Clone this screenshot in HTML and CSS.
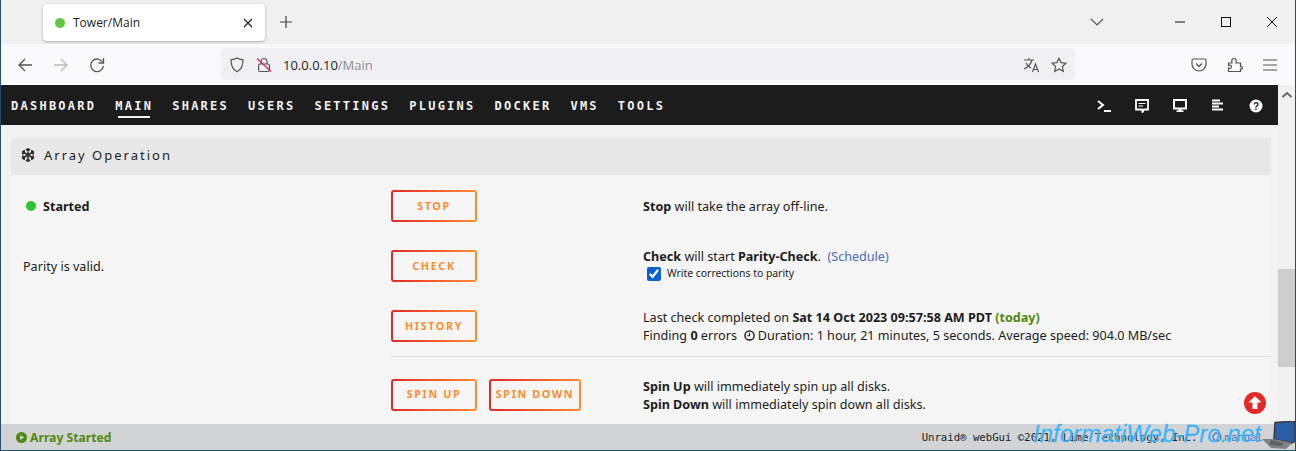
FILE: index.html
```html
<!DOCTYPE html>
<html lang="en">
<head>
    <meta charset="UTF-8">
    <title>Tower/Main</title>
    <link rel="stylesheet" href="styles.css">
</head>
<body>
    <div class="window">
        <!-- browser tabs -->
        <div class="tabbar">
            <div class="tab">
                <span class="favicon"></span>
                <span class="tab-title">Tower/Main</span>
                <svg class="tab-close" width="10" height="10" viewBox="0 0 10 10"><path d="M1 1l8 8M9 1l-8 8" stroke="#222" stroke-width="1.2"/></svg>
            </div>
            <svg class="tab-new" width="14" height="14" viewBox="0 0 14 14"><path d="M7 1v12M1 7h12" stroke="#444" stroke-width="1.2"/></svg>
            <div class="tabbar-right">
                <svg class="tab-list" width="14" height="8" viewBox="0 0 14 8"><path d="M1 1l6 6 6-6" fill="none" stroke="#555" stroke-width="1.2"/></svg>
                <div class="win-controls">
                    <svg width="10" height="10" viewBox="0 0 10 10"><path d="M0 5h10" stroke="#111" stroke-width="1"/></svg>
                    <svg width="10" height="10" viewBox="0 0 10 10"><rect x=".5" y=".5" width="9" height="9" fill="none" stroke="#111"/></svg>
                    <svg width="10" height="10" viewBox="0 0 10 10"><path d="M0 0l10 10M10 0L0 10" stroke="#111" stroke-width="1"/></svg>
                </div>
            </div>
        </div>

        <!-- browser toolbar -->
        <div class="toolbar">
            <div class="tool-buttons">
                <svg width="16" height="16" viewBox="0 0 16 16"><path d="M15 8H2M8 2L2 8l6 6" fill="none" stroke="#555" stroke-width="1.3"/></svg>
                <svg width="16" height="16" viewBox="0 0 16 16"><path d="M1 8h13M8 2l6 6-6 6" fill="none" stroke="#bbb" stroke-width="1.3"/></svg>
                <svg width="16" height="16" viewBox="0 0 16 16"><path d="M13.5 5A6.3 6.3 0 1 0 14.4 9" fill="none" stroke="#555" stroke-width="1.3"/><path d="M14.5 1v5h-5" fill="none" stroke="#555" stroke-width="1.3"/></svg>
            </div>
            <div class="urlbar">
                <svg width="16" height="16" viewBox="0 0 16 16"><path d="M8 1c2 1.2 4 1.6 6 1.8 0 5-1 9.500-6 12C3 12.300 2 7.800 2 2.800 4 2.600 6 2.200 8 1z" fill="none" stroke="#555" stroke-width="1.2"/></svg>
                <svg class="lock" width="16" height="16" viewBox="0 0 16 16"><path d="M5 7V4.500a3 3 0 0 1 6 0V7" fill="none" stroke="#555" stroke-width="1.2"/><rect x="2.600" y="7" width="10.800" height="7.500" rx="1.500" fill="none" stroke="#555" stroke-width="1.2"/><path d="M1 1.500l14 13" stroke="#e22850" stroke-width="1.300"/></svg>
                <span class="url">10.0.0.10<span class="url-path">/Main</span></span>
                <svg class="translate" width="18" height="16" viewBox="0 0 18 16"><path d="M1 3h10M6 1v2M9 3C8 7 5 10 1 12M3 6c1 2.500 3 4 5 5" fill="none" stroke="#555" stroke-width="1.200"/><path d="M9.500 15l3-8 3 8M10.500 12.500h4" fill="none" stroke="#555" stroke-width="1.200"/></svg>
                <svg width="16" height="16" viewBox="0 0 16 16"><path d="M8 1.200l2.100 4.400 4.800.6-3.500 3.300.9 4.800L8 12l-4.300 2.300.9-4.800L1.100 6.200l4.800-.6z" fill="none" stroke="#555" stroke-width="1.200"/></svg>
            </div>
            <div class="tool-right">
                <svg width="16" height="16" viewBox="0 0 16 16"><path d="M2.500 2h11A1.500 1.500 0 0 1 15 3.500V7a7 7 0 0 1-14 0V3.500A1.500 1.500 0 0 1 2.500 2z" fill="none" stroke="#555" stroke-width="1.200"/><path d="M5 6.500l3 3 3-3" fill="none" stroke="#555" stroke-width="1.300"/></svg>
                <svg width="16" height="16" viewBox="0 0 16 16"><path d="M1.500 6H5C4 3 5.500 1.500 7 1.500S10 3 9 6h4.500v3.500C16 8.500 16 13 13.500 12v2.500h-12V11c2 1 3-.5 3-1.500S3.500 7.500 1.500 8.500z" fill="none" stroke="#555" stroke-width="1.200"/></svg>
                <svg width="14" height="12" viewBox="0 0 14 12"><path d="M0 1h14M0 6h14M0 11h14" stroke="#555" stroke-width="1.200"/></svg>
            </div>
        </div>

        <div class="viewport">
            <div class="page">
                <!-- unraid menu -->
                <nav class="menu">
                    <div class="menu-links">
                        <a>DASHBOARD</a>
                        <a class="active">MAIN</a>
                        <a>SHARES</a>
                        <a>USERS</a>
                        <a>SETTINGS</a>
                        <a>PLUGINS</a>
                        <a>DOCKER</a>
                        <a>VMS</a>
                        <a>TOOLS</a>
                    </div>
                    <div class="menu-icons">
                        <svg width="14" height="14" viewBox="0 0 14 14"><path d="M1 2l5 4-5 4" fill="none" stroke="#fff" stroke-width="2"/><path d="M7 12h7" stroke="#fff" stroke-width="2"/></svg>
                        <svg width="14" height="14" viewBox="0 0 14 14"><path d="M1 1h12v9.500H9L7.500 13 7 10.500H1z" fill="none" stroke="#fff" stroke-width="1.800"/><path d="M3.500 4.500h7M3.500 7h4.500" stroke="#fff" stroke-width="1.200"/></svg>
                        <svg width="14" height="14" viewBox="0 0 14 14"><path d="M1 1h12v8.500H1z" fill="none" stroke="#fff" stroke-width="2"/><path d="M5.500 10h3v1.500h2V13h-7v-1.500h2z" fill="#fff"/></svg>
                        <svg width="14" height="14" viewBox="0 0 14 14"><path d="M1 1.500h8M1 4.500h11M1 7.500h7M1 10.500h11" stroke="#fff" stroke-width="2"/></svg>
                        <svg width="14" height="14" viewBox="0 0 14 14"><circle cx="7" cy="7" r="6.500" fill="#fff"/><text class="help-mark" x="7" y="10.500" text-anchor="middle">?</text></svg>
                    </div>
                </nav>

                <section class="array-op">
                    <div class="title">
                        <svg width="14" height="14" viewBox="0 0 14 14"><path d="M7 0v14M1 3.500l12 7M13 3.500l-12 7M5 1l2 2 2-2M5 13l2-2 2 2M1 6l2.500-1L3 2M13 6l-2.500-1L11 2M1 8l2.500 1L3 12M13 8l-2.500 1 .5 3" fill="none" stroke="#2b2b2b" stroke-width="1.500"/></svg>
                        <span>Array Operation</span>
                    </div>

                    <div class="rows">
                        <div class="row">
                            <div class="state"><span class="dot"></span><b>Started</b></div>
                            <div class="actions"><button>STOP</button></div>
                            <div class="info"><b>Stop</b> will take the array off-line.</div>
                        </div>
                        <div class="row">
                            <div class="note">Parity is valid.</div>
                            <div class="actions"><button>CHECK</button></div>
                            <div class="info info-check">
                                <div><b>Check</b> will start <b>Parity-Check</b>.&nbsp; <a class="link">(Schedule)</a></div>
                                <label class="correct"><input type="checkbox" checked>Write corrections to parity</label>
                            </div>
                        </div>
                        <div class="row">
                            <div></div>
                            <div class="actions"><button>HISTORY</button></div>
                            <div class="info">
                                <div>Last check completed on <b>Sat 14 Oct 2023 09:57:58 AM PDT</b> <b class="today">(today)</b></div>
                                <div>Finding <b>0</b> errors &nbsp;<svg class="clock" width="11" height="11" viewBox="0 0 12 12"><circle cx="6" cy="6" r="5" fill="none" stroke="#222" stroke-width="1.600"/><path d="M6 3v3.300H3.500" fill="none" stroke="#222" stroke-width="1.200"/></svg> Duration: 1 hour, 21 minutes, 5 seconds. Average speed: 904.0 MB/sec</div>
                            </div>
                        </div>
                        <div class="row row-spin">
                            <div class="actions"><button>SPIN UP</button><button class="wide">SPIN DOWN</button></div>
                            <div class="info">
                                <div><b>Spin Up</b> will immediately spin up all disks.</div>
                                <div><b>Spin Down</b> will immediately spin down all disks.</div>
                            </div>
                        </div>
                    </div>
                </section>

                <svg class="to-top" width="22" height="22" viewBox="0 0 22 22"><circle cx="11" cy="11" r="11" fill="#e22828"/><path d="M11 4l6.500 6.500H13.500V17h-5v-6.500H4.500z" fill="#fff"/></svg>
            </div>

            <div class="scrollbar">
                <svg width="12" height="7" viewBox="0 0 12 7"><path d="M1.500 6L6 2l4.500 4" fill="none" stroke="#666" stroke-width="2"/></svg>
                <div class="thumb"></div>
            </div>
        </div>

        <footer class="footer">
            <div class="footer-state">
                <svg width="11" height="11" viewBox="0 0 12 12"><circle cx="6" cy="6" r="6" fill="#4f8a10"/><path d="M4.500 3.200L9 6l-4.500 2.800z" fill="#d2d3d5"/></svg>
                Array Started
            </div>
            <div class="footer-copy">
                <span class="copyright">Unraid® webGui ©2021, Lime Technology, Inc.</span>
                <svg width="10" height="10" viewBox="0 0 10 10"><circle cx="5" cy="5" r="4" fill="none" stroke="#486dba" stroke-width="1.300"/></svg>
                <span class="manual">manual</span>
            </div>
        </footer>

        <!-- watermark on top of the screenshot -->
        <div class="watermark">InformatiWeb-Pro.net</div>
        <svg class="laptop" width="33" height="29" viewBox="0 0 33 29">
            <path d="M13 1.500L33 0v20l-3 2-18-4z" fill="#2a5ea8" stroke="#3a3a3a" stroke-width="1.500"/>
            <path d="M0 18l12 0 18 4-6 6-15-1z" fill="#808285"/>
            <path d="M9 19l13 3-3 3-12-1z" fill="#5f6164"/>
        </svg>
    </div>
</body>
</html>
```

FILE: styles.css
```css
* {
    box-sizing: border-box;
}
html, body {
    margin: 0;
    height: 100%;
    overflow: hidden;
}
body {
    font-family: "Noto Sans", "Open Sans", sans-serif;
    font-size: 13px;
    color: #1c1c1c;
}
svg {
    display: block;
    flex: none;
}

.window {
    position: relative;
    width: 1296px;
    height: 451px;
    display: flex;
    flex-direction: column;
    border-left: 1px solid #1b5272;
    border-right: 1px solid #1b5272;
    border-bottom: 1px solid #1b5272;
    background: #f2f2f2;
}

/* browser tabs */
.tabbar {
    height: 44px;
    flex: none;
    display: flex;
    align-items: center;
    background: #f0f0f0;
    padding: 0 0 0 42px;
}
.tab {
    width: 222px;
    height: 37px;
    margin-top: 1px;
    display: flex;
    align-items: center;
    padding: 0 12px 0 12px;
    background: #fff;
    border-radius: 4px;
    box-shadow: 0 1px 3px rgba(0, 0, 0, 0.3);
}
.favicon {
    width: 10px;
    height: 10px;
    border-radius: 50%;
    background: #5fc63f;
}
.tab-title {
    flex: 1;
    margin-left: 8px;
    font-family: "Open Sans", sans-serif;
    font-size: 12px;
    color: #1c1c1c;
}
.tab-new {
    margin-left: 14px;
}
.tabbar-right {
    flex: 1;
    display: flex;
    justify-content: flex-end;
    align-items: center;
}
.tab-list {
    margin-right: 71px;
}
.win-controls {
    display: flex;
    gap: 36px;
    padding-right: 18px;
}

/* browser toolbar */
.toolbar {
    height: 41px;
    flex: none;
    display: flex;
    align-items: center;
    background: #f9f9fb;
    border-bottom: 1px solid #fff;
    padding-left: 16px;
}
.tool-buttons {
    display: flex;
    gap: 20px;
    width: 204px;
    margin-top: 1px;
}
.urlbar {
    width: 854px;
    height: 32px;
    display: flex;
    align-items: center;
    gap: 12px;
    padding: 1px 8px 0;
    background: #f0f0f4;
    border-radius: 4px;
}
.lock {
    margin-left: -1px;
}
.url {
    flex: 1;
    margin-left: -1px;
    font-family: "Open Sans", sans-serif;
    font-size: 13px;
}
.url-path {
    color: #8a8a8e;
}
.translate {
    margin-right: -2px;
}
.tool-right {
    display: flex;
    align-items: center;
    gap: 20px;
    margin-left: 116px;
    margin-top: 1px;
}

.viewport {
    flex: 1;
    min-height: 0;
    display: flex;
}
.page {
    position: relative;
    width: 1277px;
    overflow: hidden;
}
.scrollbar {
    flex: 1;
    display: flex;
    flex-direction: column;
    align-items: center;
    padding-top: 6px;
    background: #f0f0f0;
}
.thumb {
    width: 100%;
    height: 98px;
    margin-top: 171px;
    background: #cdcdcd;
}

/* unraid menu */
.menu {
    height: 40px;
    display: flex;
    align-items: center;
    justify-content: space-between;
    background: #1c1c1c;
    padding: 2px 15px 0 10px;
}
.menu-links {
    display: flex;
    gap: 19px;
}
.menu-links a {
    position: relative;
    font-family: "DejaVu Sans Mono", monospace;
    font-size: 12px;
    font-weight: 700;
    letter-spacing: 2.25px;
    color: #f2f2f2;
}
.menu-links a.active::after {
    content: "";
    position: absolute;
    left: 3px;
    right: 3px;
    bottom: -5px;
    height: 2px;
    background: #f2f2f2;
}
.menu-icons {
    display: flex;
    gap: 24px;
}
.help-mark {
    font-family: "Liberation Sans", sans-serif;
    font-size: 10px;
    font-weight: 700;
    fill: #1c1c1c;
}

/* array operation */
.array-op {
    margin: 13px 7px 0 10px;
    background: #f5f5f5;
}
.title {
    height: 37px;
    display: flex;
    align-items: center;
    gap: 9px;
    padding: 0 0 3px 10px;
    background: #e8e8e8;
    font-size: 13px;
    letter-spacing: 2px;
}
.rows {
    display: flex;
    flex-direction: column;
    padding-top: 1px;
}
.row {
    height: 60px;
    display: grid;
    grid-template-columns: 380px 252px 1fr;
    align-items: center;
}
.row-spin {
    height: 76px;
    margin-left: 379px;
    grid-template-columns: 253px 1fr;
    border-top: 1px solid #e0e0e0;
}
.row-spin .actions {
    padding-left: 1px;
}
.state {
    display: flex;
    align-items: center;
    gap: 7px;
    padding-left: 15px;
    font-size: 12.6px;
}
.dot {
    width: 10px;
    height: 10px;
    border-radius: 50%;
    background: #2dc52d;
}
.note {
    padding-left: 12px;
    font-size: 12.6px;
}
.actions {
    display: flex;
    gap: 12px;
}
button {
    width: 86px;
    height: 32px;
    padding: 0 0 2px;
    border: 2px solid transparent;
    border-radius: 3px;
    background: linear-gradient(#f5f5f5, #f5f5f5) padding-box, linear-gradient(90deg, #e22828, #ff8c2f) border-box;
    font-family: "Noto Sans", sans-serif;
    font-size: 10.8px;
    font-weight: 700;
    letter-spacing: 1.6px;
    color: #ff8c2f;
}
button.wide {
    width: 92px;
}
.info {
    padding-top: 2px;
    line-height: 18px;
    font-size: 12.6px;
}
.info-check {
    padding: 0 0 2px;
}
.link {
    color: #486dba;
}
.correct {
    display: flex;
    align-items: center;
    margin: -1px 0 0 4px;
    font-size: 10.4px;
    line-height: 17px;
}
.correct input {
    width: 14px;
    height: 14px;
    margin: 0 6px 0 0;
    accent-color: #0a62d0;
}
.today {
    color: #4f8a10;
}
.clock {
    display: inline-block;
    vertical-align: -1px;
}
.to-top {
    position: absolute;
    right: 12px;
    bottom: 10px;
}

/* footer */
.footer {
    height: 26px;
    flex: none;
    display: flex;
    align-items: center;
    justify-content: space-between;
    background: #d2d3d5;
    padding: 0 32px 0 15px;
}
.footer-state {
    display: flex;
    align-items: center;
    gap: 3px;
    font-size: 12.2px;
    font-weight: 700;
    color: #4f8a10;
}
.footer-copy {
    display: flex;
    align-items: center;
    gap: 3px;
    font-family: "DejaVu Sans Mono", monospace;
    font-size: 10.66px;
    color: #1c1c1c;
}
.copyright {
    margin-right: 11px;
}
.manual {
    color: #486dba;
}

/* watermark */
.watermark {
    position: absolute;
    left: 1032px;
    bottom: 2px;
    font-family: "Liberation Sans", sans-serif;
    font-style: italic;
    font-size: 24px;
    line-height: 28px;
    color: rgba(30, 170, 250, 0.85);
    -webkit-text-stroke: 0.3px rgba(30, 170, 250, 0.85);
    text-shadow: 0 0 1px rgba(255, 255, 255, 0.6);
}
.laptop {
    position: absolute;
    right: 0;
    bottom: 0;
}
```
